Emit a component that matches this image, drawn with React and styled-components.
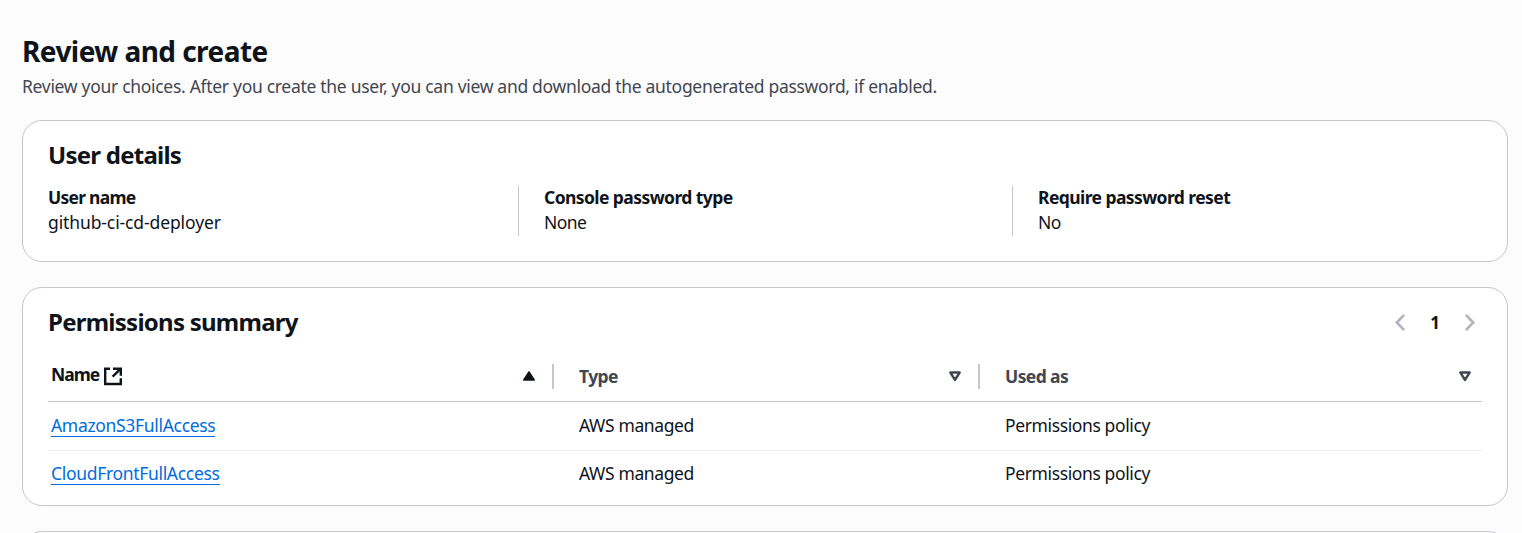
import React from 'react';
import styled, { createGlobalStyle } from 'styled-components';

const GlobalStyle = createGlobalStyle`
  * { box-sizing: border-box; }
  html, body { margin: 0; background: #fcfcfd; overflow: hidden; }
  body {
    color: #0f141a;
    font-family: 'Noto Sans', 'Open Sans', sans-serif;
    font-size: 17.5px;
    line-height: 25px;
    letter-spacing: -0.3px;
  }
`;

const Page = styled.main`
  height: 533px;
  padding: 34px 14px 0 22px;
  overflow: hidden;
`;

const PageHeader = styled.header`
  height: 86px;
`;

const Title = styled.h1`
  margin: 0;
  font-size: 28px;
  line-height: 34px;
  font-weight: 700;
  letter-spacing: -0.55px;
`;

const Description = styled.p`
  margin: 6px 0 0;
  color: #424650;
`;

const Card = styled.section`
  height: ${(p) => p.$height}px;
  margin-bottom: 25px;
  padding: 19px 25px 0;
  background: #fff;
  border: 1px solid #c6c6cd;
  border-radius: 20px;
`;

const CardHeader = styled.div`
  display: flex;
  align-items: center;
  justify-content: space-between;
  height: 30px;
`;

const CardTitle = styled.h2`
  margin: 0;
  font-size: 24px;
  line-height: 30px;
  font-weight: 700;
  letter-spacing: -0.75px;
`;

const Details = styled.div`
  display: grid;
  grid-template-columns: 470px 494px 1fr;
  margin-top: 16px;
`;

const Detail = styled.div`
  height: 50px;
  & + & {
    padding-left: 25px;
    border-left: 1px solid #c6c6cd;
  }
`;

const Label = styled.div`
  margin-top: -1px;
  font-weight: 700;
  letter-spacing: ${(p) => p.$tracking ?? -0.58}px;
`;

const Value = styled.div`
  letter-spacing: ${(p) => p.$tracking ?? -0.6}px;
`;

const Pagination = styled.nav`
  display: flex;
  align-items: center;
  gap: 24px;
  padding-right: 7px;
`;

const PageNumber = styled.span`
  width: 12px;
  text-align: center;
  font-size: 17px;
  font-weight: 700;
`;

const Row = styled.div`
  display: grid;
  grid-template-columns: 506px 426px 1fr;
  align-items: center;
  height: ${(p) => p.$height}px;
  padding-bottom: 2px;
  border-bottom: 1px solid ${(p) => p.$line};
`;

const HeaderRow = styled(Row)`
  padding: 14px 0 0;
`;

const HeaderCell = styled.div`
  display: flex;
  align-items: center;
  height: 25px;
  padding-left: ${(p) => (p.$first ? 3 : 25)}px;
  padding-right: ${(p) => (p.$last ? 11 : 17)}px;
  border-right: ${(p) => (p.$last ? 'none' : '2px solid #c6c6cd')};
  color: ${(p) => (p.$first ? '#0f141a' : '#424650')};
  font-weight: 700;
  letter-spacing: -0.6px;
  justify-content: space-between;
`;

const HeaderLabel = styled.span`
  display: flex;
  align-items: center;
  height: 25px;
`;

const NameText = styled.span`
  width: 53px;
  margin-top: -4px;
  letter-spacing: -1px;
`;

const Cell = styled.div`
  padding-left: ${(p) => (p.$first ? 3 : 25)}px;
  letter-spacing: ${(p) => (p.$first ? -0.32 : -0.38)}px;
`;

const Link = styled.a`
  display: block;
  width: fit-content;
  height: 24px;
  margin-bottom: 1px;
  color: #006ce0;
  border-bottom: 1px solid #006ce0;
`;

const Icon = styled.svg`
  display: block;
  flex: none;
  overflow: visible;
`;

const Chevron = ({ d }) => (
  <Icon width="10" height="17" viewBox="0 0 10 17" fill="none" stroke="#b4b4bb" strokeWidth="2.7">
    <path d={d} />
  </Icon>
);

const SortUp = () => (
  <Icon width="12" height="10" viewBox="0 0 12 10" fill="#0f141a" stroke="#0f141a" strokeWidth="1.6" strokeLinejoin="round">
    <path d="M6 1 L11.2 9 H0.8 Z" />
  </Icon>
);

const SortDown = () => (
  <Icon width="12" height="10" viewBox="0 0 12 10" fill="none" stroke="#424650" strokeWidth="2.5" strokeLinejoin="round">
    <path d="M1.4 1.6 H10.6 L6 8.9 Z" />
  </Icon>
);

const External = () => (
  <Icon width="18" height="18" viewBox="0 0 18 18" fill="none" stroke="#0f141a" strokeWidth="2.4">
    <path d="M6 1.7 H1.2 V17 H16.8 V11.3" />
    <path d="M9 1.7 H16.8 V8.7" />
    <path d="M16.3 2.2 L8.6 9.6" />
  </Icon>
);

const policies = ['AmazonS3FullAccess', 'CloudFrontFullAccess'];

export default function App() {
  return (
    <>
      <GlobalStyle />
      <Page>
        <PageHeader>
          <Title>Review and create</Title>
          <Description>
            Review your choices. After you create the user, you can view and download the autogenerated password, if enabled.
          </Description>
        </PageHeader>
        <Card $height={142}>
          <CardHeader>
            <CardTitle>User details</CardTitle>
          </CardHeader>
          <Details>
            <Detail>
              <Label $tracking={-0.75}>User name</Label>
              <Value $tracking={-0.11}>github-ci-cd-deployer</Value>
            </Detail>
            <Detail>
              <Label>Console password type</Label>
              <Value>None</Value>
            </Detail>
            <Detail>
              <Label>Require password reset</Label>
              <Value>No</Value>
            </Detail>
          </Details>
        </Card>
        <Card $height={219}>
          <CardHeader>
            <CardTitle>Permissions summary</CardTitle>
            <Pagination>
              <Chevron d="M9.1 0.9 L1.8 8.5 L9.1 16.1" />
              <PageNumber>1</PageNumber>
              <Chevron d="M0.9 0.9 L8.2 8.5 L0.9 16.1" />
            </Pagination>
          </CardHeader>
          <HeaderRow $height={65} $line="#c6c6cd">
            <HeaderCell $first>
              <HeaderLabel>
                <NameText>Name</NameText>
                <External />
              </HeaderLabel>
              <SortUp />
            </HeaderCell>
            <HeaderCell>
              <HeaderLabel>Type</HeaderLabel>
              <SortDown />
            </HeaderCell>
            <HeaderCell $last>
              <HeaderLabel>Used as</HeaderLabel>
              <SortDown />
            </HeaderCell>
          </HeaderRow>
          {policies.map((name, i) => (
            <Row key={name} $height={i === 0 ? 49 : 48} $line={i === 0 ? '#ebebf0' : 'transparent'}>
              <Cell $first><Link>{name}</Link></Cell>
              <Cell>AWS managed</Cell>
              <Cell>Permissions policy</Cell>
            </Row>
          ))}
        </Card>
        <Card $height={100} />
      </Page>
    </>
  );
}
